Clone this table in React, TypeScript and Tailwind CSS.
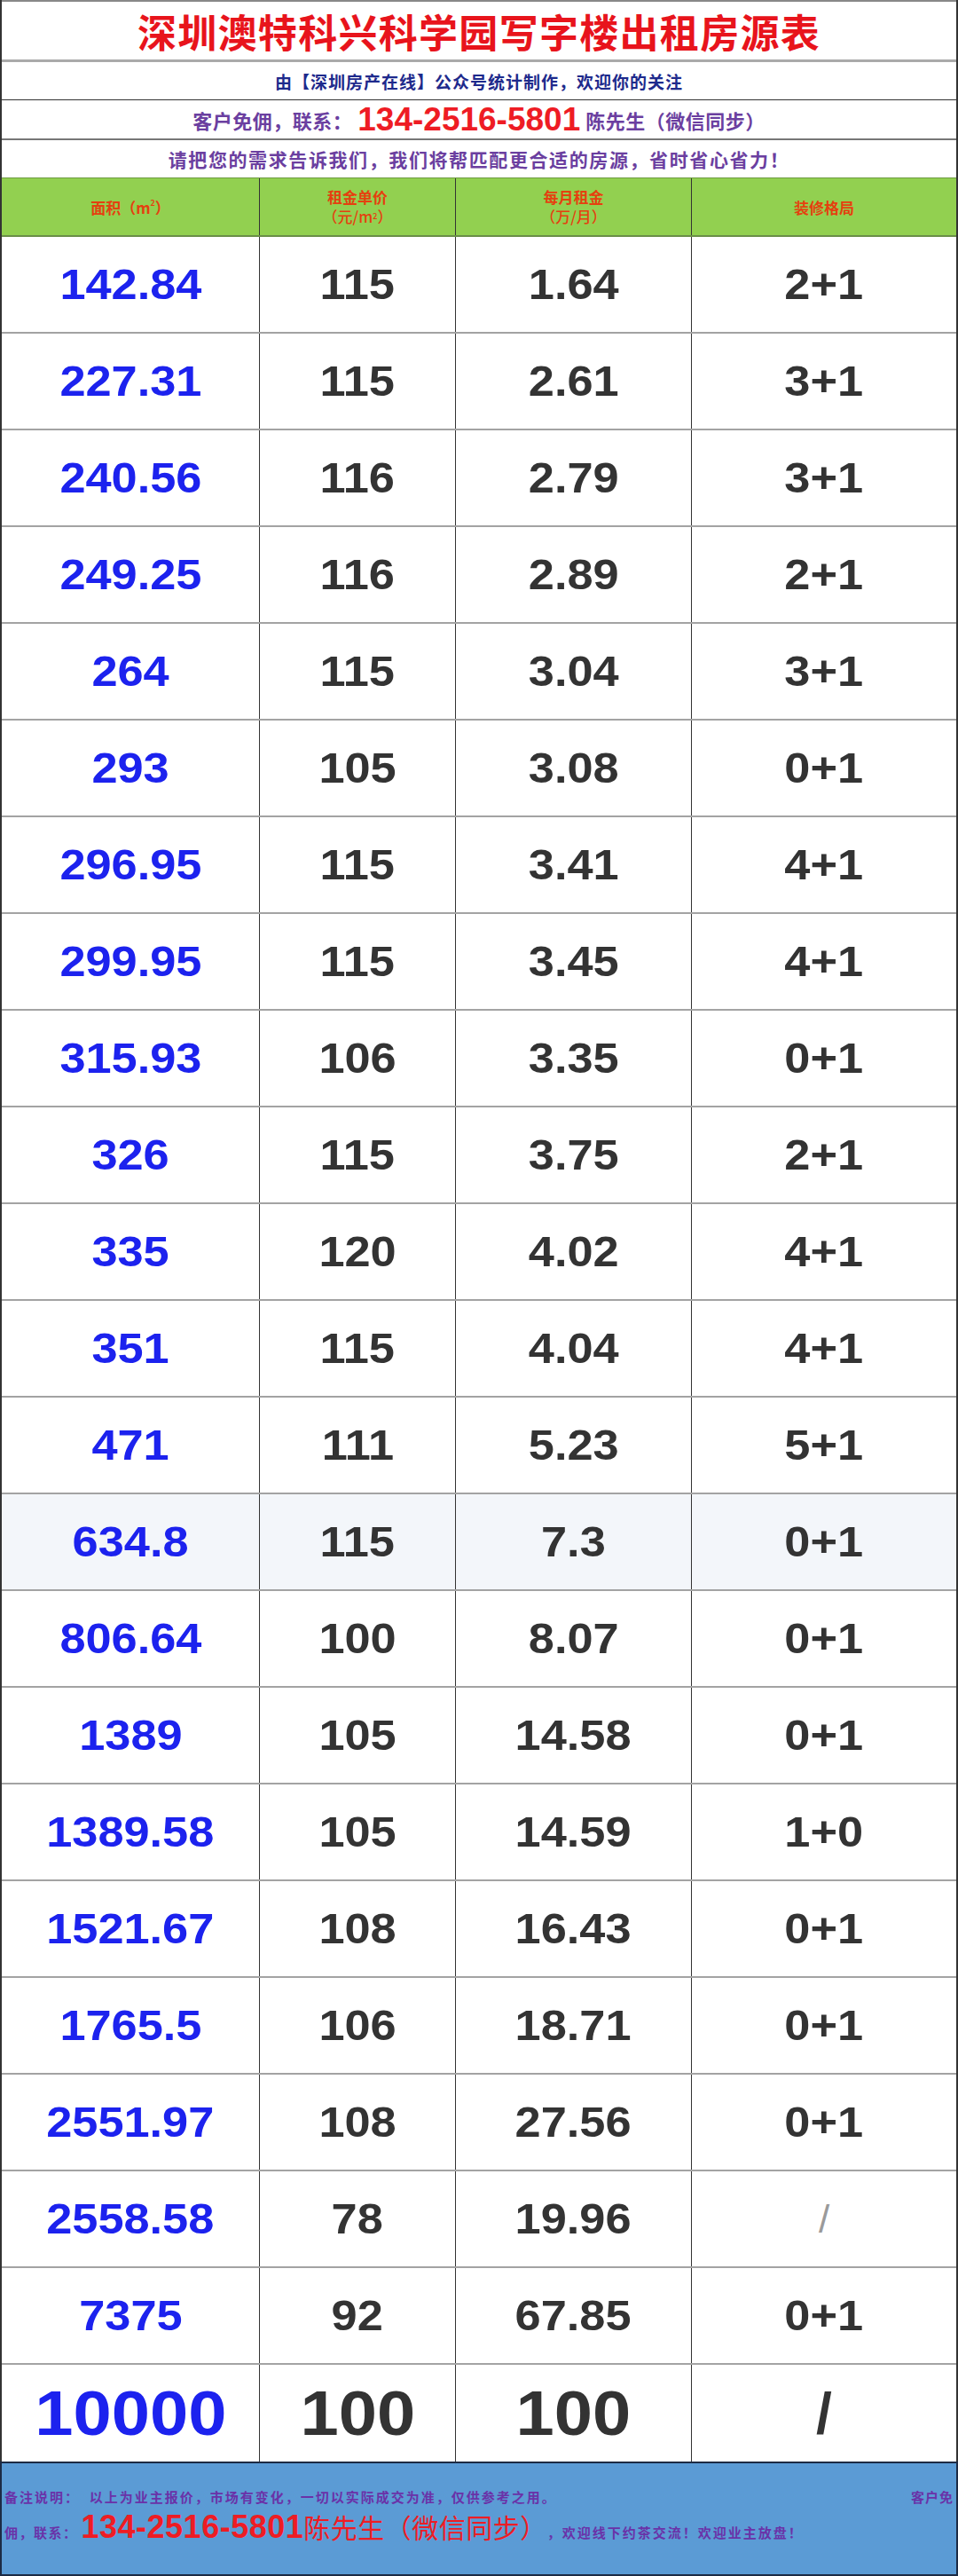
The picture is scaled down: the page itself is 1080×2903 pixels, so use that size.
import React from "react";

const rows: [string, string, string, string][] = [
  ["142.84", "115", "1.64", "2+1"],
  ["227.31", "115", "2.61", "3+1"],
  ["240.56", "116", "2.79", "3+1"],
  ["249.25", "116", "2.89", "2+1"],
  ["264", "115", "3.04", "3+1"],
  ["293", "105", "3.08", "0+1"],
  ["296.95", "115", "3.41", "4+1"],
  ["299.95", "115", "3.45", "4+1"],
  ["315.93", "106", "3.35", "0+1"],
  ["326", "115", "3.75", "2+1"],
  ["335", "120", "4.02", "4+1"],
  ["351", "115", "4.04", "4+1"],
  ["471", "111", "5.23", "5+1"],
  ["634.8", "115", "7.3", "0+1"],
  ["806.64", "100", "8.07", "0+1"],
  ["1389", "105", "14.58", "0+1"],
  ["1389.58", "105", "14.59", "1+0"],
  ["1521.67", "108", "16.43", "0+1"],
  ["1765.5", "106", "18.71", "0+1"],
  ["2551.97", "108", "27.56", "0+1"],
  ["2558.58", "78", "19.96", "/"],
  ["7375", "92", "67.85", "0+1"],
];

const cjk = "font-['Noto_Sans_CJK_SC',sans-serif]";
const num = "font-['Liberation_Sans','Noto_Sans_CJK_SC',sans-serif]";

function Num({ v, cls }: { v: string; cls: string }) {
  return (
    <span className={`inline-block scale-x-[1.09] text-[48px] font-bold leading-none ${num} ${cls}`}>{v}</span>
  );
}

export default function App() {
  return (
    <div className="w-[1080px] bg-white">
      <div className="border-l-2 border-r-2 border-[#333]">
        {/* title */}
        <div className={`flex h-[70px] items-center justify-center border-t-2 border-b-[3px] border-t-[#888] border-b-[#aaa] ${cjk}`}>
          <span className="text-[44px] font-bold leading-none tracking-[1.3px] text-[#e8141c]">深圳澳特科兴科学园写字楼出租房源表</span>
        </div>
        <div className={`flex h-[43px] items-center justify-center border-b border-[#333] ${cjk}`}>
          <span className="text-[19px] font-bold leading-none tracking-[1px] text-[#1e2a8c]">由【深圳房产在线】公众号统计制作，欢迎你的关注</span>
        </div>
        <div className={`flex h-[45px] items-center justify-center border-b-2 border-[#777] ${cjk}`}>
          <span className="text-[22px] font-bold leading-none tracking-[0.5px] text-[#6b3fa0]">客户免佣，联系：</span>
          <span className={`mx-[6px] text-[37px] font-bold leading-none text-[#ee1c24] ${num}`}>134-2516-5801</span>
          <span className="text-[22px] font-bold leading-none tracking-[0.5px] text-[#6b3fa0]">陈先生（微信同步）</span>
        </div>
        <div className={`flex h-[42px] items-center justify-center ${cjk}`}>
          <span className="text-[21px] font-bold leading-none tracking-[1.6px] text-[#6b3fa0]">请把您的需求告诉我们，我们将帮匹配更合适的房源，省时省心省力！</span>
        </div>
        {/* green header */}
        <div className={`grid h-[67px] grid-cols-[290px_221px_266px_1fr] border-t border-b-2 border-t-[#6d9a40] border-b-[#6a8f48] bg-[#92d050] text-[#e5400f] ${cjk}`}>
          <div className="flex items-center justify-center text-[17px] font-bold leading-none">
            面积（m<sup className="text-[9px]">2</sup>）
          </div>
          <div className="flex flex-col items-center justify-center border-l border-[#333] text-[17px] font-bold leading-[22px]">
            <span>租金单价</span>
            <span className="font-medium">（元/m<sup className="text-[9px]">2</sup>）</span>
          </div>
          <div className="flex flex-col items-center justify-center border-l border-[#333] text-[17px] font-bold leading-[22px]">
            <span>每月租金</span>
            <span className="font-medium">（万/月）</span>
          </div>
          <div className="flex items-center justify-center border-l border-[#333] text-[17px] font-bold leading-none">
            装修格局
          </div>
        </div>
        {/* data rows */}
        {rows.map((r, i) => (
          <div
            key={i}
            className={`grid h-[109px] grid-cols-[290px_221px_266px_1fr] border-b-2 border-[#a3a3a3] ${r[0] === "634.8" ? "bg-[#f3f6fa]" : "bg-white"}`}
          >
            <div className="flex items-center justify-center">
              <Num v={r[0]} cls="text-[#1c22ee]" />
            </div>
            <div className="flex items-center justify-center border-l border-[#333]">
              <Num v={r[1]} cls="text-[#333333]" />
            </div>
            <div className="flex items-center justify-center border-l border-[#333]">
              <Num v={r[2]} cls="text-[#333333]" />
            </div>
            <div className="flex items-center justify-center border-l border-[#333]">
              {r[3] === "/" ? (
                <span className={`text-[44px] font-normal leading-none text-[#9a9a9a] ${num}`}>/</span>
              ) : (
                <Num v={r[3]} cls="text-[#333333]" />
              )}
            </div>
          </div>
        ))}
        {/* last row */}
        <div className="grid h-[109px] grid-cols-[290px_221px_266px_1fr] bg-white">
          <div className="flex items-center justify-center">
            <span className={`inline-block scale-x-[1.11] text-[70px] font-bold leading-none text-[#1c22ee] ${num}`}>10000</span>
          </div>
          <div className="flex items-center justify-center border-l border-[#333]">
            <span className={`inline-block scale-x-[1.11] text-[70px] font-bold leading-none text-[#333] ${num}`}>100</span>
          </div>
          <div className="flex items-center justify-center border-l border-[#333]">
            <span className={`inline-block scale-x-[1.11] text-[70px] font-bold leading-none text-[#333] ${num}`}>100</span>
          </div>
          <div className="flex items-center justify-center border-l border-[#333]">
            <span className={`text-[64px] font-bold leading-none text-[#333] ${num}`}>/</span>
          </div>
        </div>
      </div>
      {/* footer */}
      <div className={`flex h-[129px] flex-col border-2 border-[#1d2b45] bg-[#5b9bd5] px-[3px] pt-[28px] text-[#6a32a8] ${cjk}`}>
        <div className="flex items-center justify-between text-[15px] font-bold leading-[20px] tracking-[2px]">
          <span>备注说明：&nbsp;&nbsp;以上为业主报价，市场有变化，一切以实际成交为准，仅供参考之用。</span>
          <span className="tracking-[1px]">客户免</span>
        </div>
        <div className="mt-[6px] flex items-baseline whitespace-nowrap">
          <span className="text-[15px] font-bold tracking-[1.5px]">佣，联系：</span>
          <span className={`ml-[4px] text-[36px] font-bold leading-none tracking-[0.5px] text-[#ee1c24] ${num}`}>134-2516-5801</span>
          <span className="text-[30px] leading-none tracking-[0.5px] text-[#ee1c24]">陈先生（微信同步）</span>
          <span className="text-[15px] font-bold tracking-[2px]">，欢迎线下约茶交流！欢迎业主放盘！</span>
        </div>
      </div>
    </div>
  );
}
